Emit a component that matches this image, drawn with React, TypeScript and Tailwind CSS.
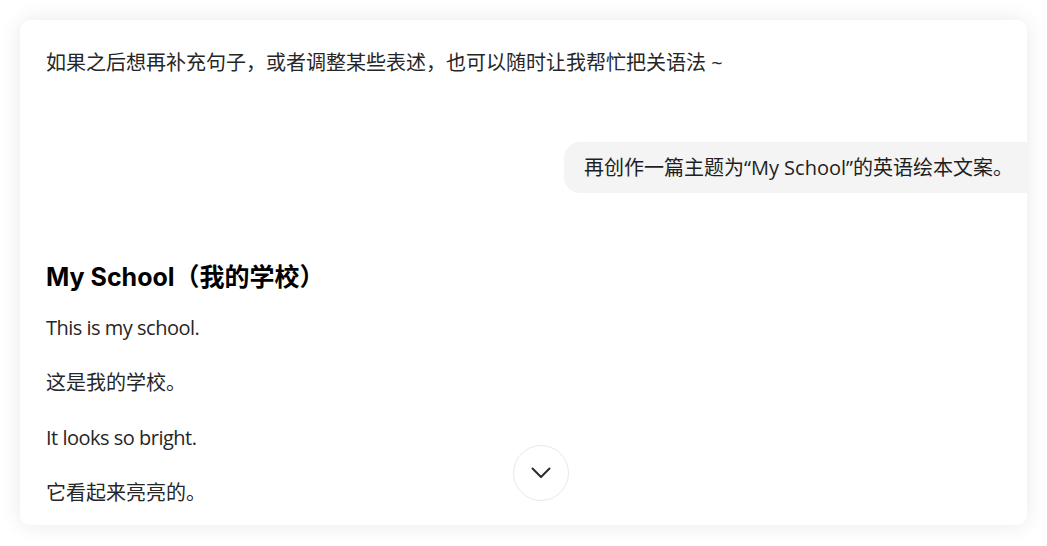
import React from 'react';

const bodyFont = { fontFamily: "'Open Sans', 'Noto Sans CJK SC', sans-serif" };

const paragraphs = [
  { text: 'This is my school.', latin: true },
  { text: '这是我的学校。', latin: false },
  { text: 'It looks so bright.', latin: true },
  { text: '它看起来亮亮的。', latin: false },
];

const App: React.FC = () => {
  return (
    <div className="w-[1047px] h-[546px] bg-white p-[20px] pb-[21px]" style={bodyFont}>
      <div className="relative h-full rounded-[10px] bg-white overflow-hidden shadow-[0_0_22px_rgba(0,0,0,0.09)]">
        <div className="flex flex-col pt-[25px] pl-[26px] text-[20px] leading-[35px] text-[#262626]">
          <p>如果之后想再补充句子，或者调整某些表述，也可以随时让我帮忙把关语法 ~</p>

          <div className="flex justify-end mt-[62px]">
            <div className="bg-[#f4f4f4] rounded-l-[16px] pl-[20px] pr-[14px] py-[10px] leading-[31px] text-[20px] text-[#1f1f1f]">
              再创作一篇主题为“My School”的英语绘本文案。
            </div>
          </div>

          <h2
            className="mt-[66px] text-[25px] leading-[36px] font-bold text-black"
            style={{ fontFamily: "Inter, 'Noto Sans CJK SC', sans-serif" }}
          >
            My School（我的学校）
          </h2>

          <div className="flex flex-col gap-[20px] mt-[15px]">
            {paragraphs.map((p) => (
              <p key={p.text} className={p.latin ? 'tracking-[-0.5px]' : ''}>
                {p.text}
              </p>
            ))}
          </div>
        </div>

        <button className="absolute left-[493px] top-[425px] w-[56px] h-[56px] rounded-full bg-white border border-[#e8e8e8] flex items-center justify-center">
          <svg width="20" height="12" viewBox="0 0 20 12" fill="none">
            <path d="M1.5 1.5 L10 10 L18.5 1.5" stroke="#2b2b2b" strokeWidth="2" strokeLinecap="round" strokeLinejoin="round" />
          </svg>
        </button>
      </div>
    </div>
  );
};

export default App;
